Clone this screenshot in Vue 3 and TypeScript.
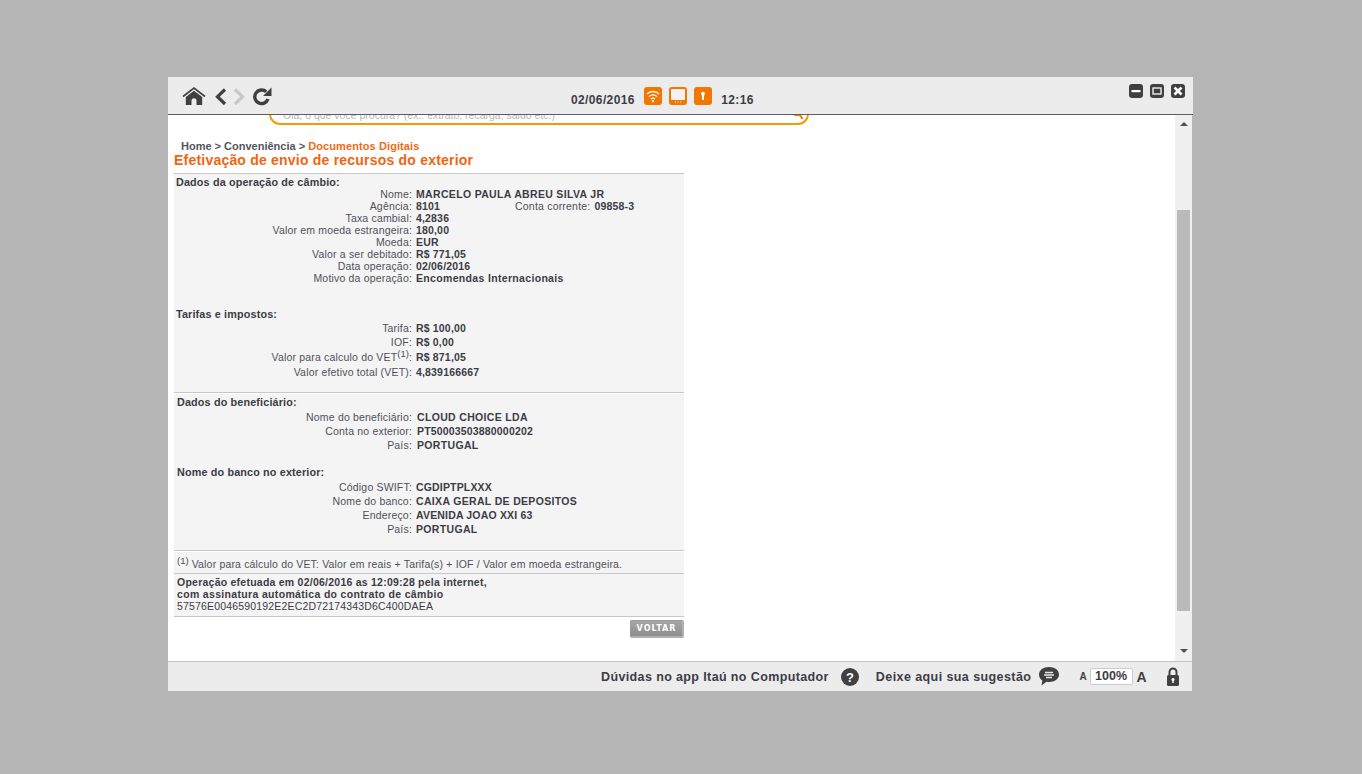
<script setup lang="ts">
interface Row { label: string; value: string; sup?: boolean; spaced?: boolean; extraLabel?: string; extraValue?: string }
const cambio: Row[] = [
  { label: 'Nome:', value: 'MARCELO PAULA ABREU SILVA JR', spaced: true },
  { label: 'Agência:', value: '8101', extraLabel: 'Conta corrente:', extraValue: '09858-3' },
  { label: 'Taxa cambial:', value: '4,2836' },
  { label: 'Valor em moeda estrangeira:', value: '180,00' },
  { label: 'Moeda:', value: 'EUR' },
  { label: 'Valor a ser debitado:', value: 'R$ 771,05' },
  { label: 'Data operação:', value: '02/06/2016' },
  { label: 'Motivo da operação:', value: 'Encomendas Internacionais', spaced: true },
]
const tarifas: Row[] = [
  { label: 'Tarifa:', value: 'R$ 100,00' },
  { label: 'IOF:', value: 'R$ 0,00' },
  { label: 'Valor para calculo do VET', value: 'R$ 871,05', sup: true },
  { label: 'Valor efetivo total (VET):', value: '4,839166667' },
]
const benef: Row[] = [
  { label: 'Nome do beneficiário:', value: 'CLOUD CHOICE LDA', spaced: true },
  { label: 'Conta no exterior:', value: 'PT50003503880000202' },
  { label: 'País:', value: 'PORTUGAL', spaced: true },
]
const banco: Row[] = [
  { label: 'Código SWIFT:', value: 'CGDIPTPLXXX' },
  { label: 'Nome do banco:', value: 'CAIXA GERAL DE DEPOSITOS', spaced: true },
  { label: 'Endereço:', value: 'AVENIDA JOAO XXI 63' },
  { label: 'País:', value: 'PORTUGAL', spaced: true },
]
</script>

<template>
  <div class="page">
    <div class="window">
      <header class="top">
        <div class="nav">
          <svg class="i-home" width="24" height="20" viewBox="0 0 24 20"><path d="M1 10.500 12 2l11 8.500" fill="none" stroke="#404040" stroke-width="1.600"/><path d="M12 4.800 3.800 11v8H9.500v-4.300a2.500 2.500 0 0 1 5 0V19h5.700v-8z" fill="#404040"/></svg>
          <svg class="i-back" width="14" height="20" viewBox="0 0 14 20"><path d="M11 3.500 3.500 10.700 11 18" fill="none" stroke="#404040" stroke-width="3.200"/></svg>
          <svg class="i-fwd" width="14" height="20" viewBox="0 0 14 20"><path d="M3 3.500l7.500 7.200L3 18" fill="none" stroke="#c8c8c8" stroke-width="3.200"/></svg>
          <svg class="i-reload" width="20" height="20" viewBox="0 0 20 20"><path d="M16 13a6.800 6.800 0 1 1-1.800-7.200" fill="none" stroke="#404040" stroke-width="3.400"/><path d="M19.500 1.500v8.500H11z" fill="#404040"/></svg>
        </div>
        <div class="status">
          <span class="date">02/06/2016</span>
          <span class="tile">
            <svg width="18" height="18" viewBox="0 0 18 18"><path d="M3 7a8.500 8.500 0 0 1 12 0M5 9.600a5.700 5.700 0 0 1 8 0M7 12a3 3 0 0 1 4 0" fill="none" stroke="#fff" stroke-width="1.300"/><circle cx="9" cy="14.200" r="1.100" fill="#fff"/></svg>
          </span>
          <span class="tile">
            <svg width="18" height="18" viewBox="0 0 18 18"><rect x="2" y="2" width="14" height="11" rx="1" fill="#f2f2f2"/><path d="M6 15h1M8.500 15h1M11 15h1" stroke="#fff" stroke-width="1"/></svg>
          </span>
          <span class="tile">
            <svg width="18" height="18" viewBox="0 0 18 18"><circle cx="9" cy="6.800" r="2" fill="#fff"/><rect x="8" y="7" width="2" height="6" fill="#fff"/></svg>
          </span>
          <span class="clock">12:16</span>
        </div>
        <div class="controls">
          <span class="ctl"><svg width="14" height="14" viewBox="0 0 14 14"><rect x="2.500" y="6" width="9" height="2.200" fill="#fff"/></svg></span>
          <span class="ctl"><svg width="14" height="14" viewBox="0 0 14 14"><rect x="3" y="4" width="8" height="6" fill="none" stroke="#eee" stroke-width="1.400"/></svg></span>
          <span class="ctl"><svg width="14" height="14" viewBox="0 0 14 14"><path d="M3.500 3.500l7 7M10.500 3.500l-7 7" stroke="#fff" stroke-width="2.600"/></svg></span>
        </div>
      </header>

      <div class="body">
        <main class="content">
          <div class="search">
            <span class="placeholder">Olá, o que você procura? (ex.: extrato, recarga, saldo etc.)</span>
            <svg width="16" height="16" viewBox="0 0 16 16"><circle cx="9" cy="5" r="5.500" fill="none" stroke="#f07c00" stroke-width="1.600"/><path d="M11.500 9.500 14.500 14" stroke="#f07c00" stroke-width="2"/></svg>
          </div>
          <div class="crumbs">Home &gt; Conveniência &gt; <span class="orange">Documentos Digitais</span></div>
          <h1 class="title">Efetivação de envio de recursos do exterior</h1>

          <section class="panel p1">
            <div class="head h1st">Dados da operação de câmbio:</div>
            <div v-for="r in cambio" :key="r.label" class="row tight">
              <span class="lab">{{ r.label }}</span>
              <span class="val" :class="{ spaced: r.spaced }">{{ r.value }}</span>
              <template v-if="r.extraLabel">
                <span class="xlab">{{ r.extraLabel }}</span>
                <span class="val">{{ r.extraValue }}</span>
              </template>
            </div>
            <div class="head h2">Tarifas e impostos:</div>
            <div v-for="r in tarifas" :key="r.label" class="row wide">
              <span class="lab">{{ r.label }}<template v-if="r.sup"><sup>(1)</sup>:</template></span>
              <span class="val">{{ r.value }}</span>
            </div>
          </section>

          <section class="panel p2">
            <div class="head hb">Dados do beneficiário:</div>
            <div v-for="r in benef" :key="r.label" class="row wide shift">
              <span class="lab">{{ r.label }}</span>
              <span class="val" :class="{ spaced: r.spaced }">{{ r.value }}</span>
            </div>
            <div class="head h3">Nome do banco no exterior:</div>
            <div v-for="r in banco" :key="r.label + r.value" class="row wide">
              <span class="lab">{{ r.label }}</span>
              <span class="val" :class="{ spaced: r.spaced }">{{ r.value }}</span>
            </div>
          </section>

          <div class="note"><sup>(1)</sup> Valor para cálculo do VET: Valor em reais + Tarifa(s) + IOF / Valor em moeda estrangeira.</div>

          <section class="panel p3">
            <strong>Operação efetuada em 02/06/2016 as 12:09:28 pela internet,</strong>
            <strong class="second">com assinatura automática do contrato de câmbio</strong>
            <span class="hash">57576E0046590192E2EC2D72174343D6C400DAEA</span>
          </section>

          <div class="actions"><button class="back" type="button">VOLTAR</button></div>
        </main>

        <aside class="scrollbar">
          <span class="arrow up"></span>
          <div class="track"><div class="thumb"></div></div>
          <span class="arrow down"></span>
        </aside>
      </div>

      <footer class="bottom">
        <span class="ftxt">Dúvidas no app Itaú no Computador</span>
        <svg class="f-q" width="18" height="18" viewBox="0 0 18 18"><circle cx="9" cy="9" r="9" fill="#404040"/><text x="9" y="13.500" text-anchor="middle" font-family="Liberation Sans, sans-serif" font-weight="700" font-size="13" fill="#fff">?</text></svg>
        <span class="ftxt f-s">Deixe aqui sua sugestão</span>
        <svg class="f-c" width="22" height="20" viewBox="0 0 22 20"><path d="M11 0c5.700 0 10 3 10 7.600s-4.300 7.400-10 7.400c-.9 0-1.700-.1-2.500-.2L3.500 18.500l.8-5C2 12 1 10 1 7.600 1 3 5.300 0 11 0z" fill="#404040"/><path d="M7 5.500h8M6 8h10M8 10.500h6" stroke="#e8e8e8" stroke-width="1.300"/></svg>
        <span class="a-small">A</span>
        <span class="zoom">100%</span>
        <span class="a-big">A</span>
        <svg class="f-l" width="14" height="20" viewBox="0 0 14 20"><path d="M3.500 9V5a3.500 3.500 0 0 1 7 0v4" fill="none" stroke="#404040" stroke-width="2"/><rect x="1" y="8" width="12" height="11" rx="1.500" fill="#404040"/><circle cx="7" cy="12.500" r="1.500" fill="#fff"/><rect x="6.300" y="12.500" width="1.400" height="3.500" fill="#fff"/></svg>
      </footer>
    </div>
  </div>
</template>

<style>
html, body { margin: 0; background: #b5b5b5; }
</style>

<style scoped>
.page {
  height: 774px;
  padding: 77px 0 0 168px;
  box-sizing: border-box;
  background: #b5b5b5;
  font-family: "Liberation Sans", Arial, sans-serif;
  overflow: hidden;
}
.window {
  width: 1025px;
  height: 614px;
  display: flex;
  flex-direction: column;
}
.top {
  height: 37px;
  flex: none;
  box-sizing: content-box;
  border-bottom: 1px solid #5c5c5c;
  background: #ececec;
  display: flex;
  position: relative;
}
.nav { display: flex; align-items: flex-start; padding: 9px 0 0 14px; }
.i-home { margin-right: 8px; }
.i-back { margin-right: 4px; }
.i-reload { margin-left: 6px; }
.status {
  position: absolute;
  left: 403px;
  top: 10px;
  display: flex;
  align-items: flex-start;
  color: #3c3c46;
  font-size: 12px;
  font-weight: 700;
  letter-spacing: .37px;
}
.date { margin-top: 6px; margin-right: 9.500px; }
.clock { margin-top: 6px; margin-left: 9px; }
.tile {
  width: 18px;
  height: 18px;
  margin-right: 7px;
  border-radius: 3px;
  background: #f07800;
  display: block;
}
.tile:nth-of-type(4) { margin-right: 0; }
.tile svg { display: block; }
.controls { position: absolute; right: 8px; top: 7px; display: flex; gap: 7px; }
.ctl { width: 14px; height: 14px; border-radius: 3px; background: #404040; display: block; }
.ctl svg { display: block; }
.body { flex: 1; min-height: 0; display: flex; background: #fff; margin-right: 1px; }
.content {
  flex: 1;
  min-width: 0;
  overflow: hidden;
  padding: 0 0 0 6px;
  color: #3c3c46;
  font-size: 11px;
  line-height: 12px;
}
.search {
  width: 540px;
  height: 24px;
  margin: -14px 0 0 95px;
  box-sizing: border-box;
  border: 2px solid #f59a00;
  border-top: 0;
  border-radius: 0 0 11px 11px;
  display: flex;
  justify-content: space-between;
  align-items: flex-end;
  padding: 0 3px 2px 12px;
}
.placeholder { color: #b8b8b8; font-size: 10.500px; line-height: 12px; }
.search svg { display: block; }
.crumbs { margin: 15px 0 0 7px; font-size: 11px; font-weight: 700; color: #55555e; line-height: 13px; }
.orange { color: #f26a10; letter-spacing: .1px; }
.title {
  margin: 0 0 5px;
  font-size: 14px;
  line-height: 15px;
  font-weight: 700;
  color: #f26510;
  letter-spacing: .21px;
}
.panel {
  width: 510px;
  background: #f4f4f4;
  border-top: 1px solid #c8c8c8;
  box-sizing: border-box;
}
.p1 { height: 219px; padding: 2px 0 0 2px; }
.p2 { height: 158px; padding: 2px 0 0 0; box-shadow: inset 0 1px 0 #fff; }
.p3 {
  height: 44px;
  padding: 2px 0 0 3px;
  border-bottom: 1px solid #c8c8c8;
  color: #3c3c46;
  font-size: 10.500px;
  line-height: 12px;
  letter-spacing: .17px;
}
.p3 strong { display: block; letter-spacing: .24px; }
.p3 .second { letter-spacing: .33px; }
.hash { display: block; line-height: 13px; }
.head {
  font-weight: 700;
  font-size: 10.800px;
  line-height: 13px;
  color: #3c3c46;
  letter-spacing: .15px;
}
.h1st { line-height: 12px; }
.p2 .head { padding-left: 3px; }
.h2 { margin-top: 23px; line-height: 14px; }
.hb { line-height: 15px; }
.h3 { margin-top: 13px; line-height: 15px; }
.row { display: flex; }
.p1 .row { margin-left: -2px; }
.tight { height: 12px; line-height: 12px; }
.wide { height: 14px; line-height: 14px; }
.p1 .wide:nth-last-child(2) { height: 15px; line-height: 16px; }
.p1 .wide:last-child { height: 15px; line-height: 16px; }
.lab { width: 238px; text-align: right; flex: none; color: #50505a; font-size: 10.500px; letter-spacing: .18px; white-space: nowrap; }
.val { margin-left: 4px; font-weight: 700; font-size: 10.500px; color: #3c3c46; letter-spacing: .17px; white-space: nowrap; }
.spaced { letter-spacing: .33px; }
.shift .val { margin-left: 5px; }
.xlab { margin-left: 75px; color: #50505a; font-size: 10.500px; letter-spacing: .2px; white-space: nowrap; }
.val + .xlab + .val { margin-left: 4px; }
sup { font-size: 9.500px; line-height: 0; vertical-align: 4px; letter-spacing: 0; }
.note {
  width: 510px;
  height: 23px;
  box-sizing: border-box;
  border-top: 1px solid #c8c8c8;
  background: #f4f4f4;
  padding: 7px 0 0 3px;
  font-size: 10.500px;
  line-height: 13px;
  color: #50505a;
  letter-spacing: .17px;
  box-shadow: inset 0 1px 0 #fff;
}
.actions { width: 510px; display: flex; justify-content: flex-end; margin-top: 3px; }
.back {
  width: 54px;
  height: 18px;
  padding: 0;
  border: 1px solid #999;
  border-bottom: 2px solid #b0b0b0;
  border-right: 2px solid #b0b0b0;
  border-radius: 2px;
  background: linear-gradient(#a8a8a8, #8c8c8c);
  color: #fff;
  font: 700 8px "DejaVu Sans", sans-serif;
  letter-spacing: 1px;
}
.scrollbar {
  width: 17px;
  flex: none;
  background: #f0f0f0;
  display: flex;
  flex-direction: column;
  align-items: center;
}
.arrow { width: 0; height: 0; border-left: 4px solid transparent; border-right: 4px solid transparent; margin: 7px 0 0; flex: none; }
.up { border-bottom: 4px solid #505050; margin-bottom: 7px; }
.down { border-top: 4px solid #505050; margin: 6px 0 8px; }
.track { flex: 1; width: 100%; padding-top: 77px; box-sizing: border-box; }
.thumb { height: 401px; background: #bababa; margin: 0 2px; }
.bottom {
  height: 29px;
  flex: none;
  border-top: 1px solid #c4c4c4;
  background: #ececec;
  display: flex;
  align-items: center;
  padding: 0 0 0 433px;
  margin-right: 1px;
  color: #3c3c46;
}
.ftxt { font-size: 12.500px; font-weight: 700; letter-spacing: .38px; white-space: nowrap; }
.f-q { margin-left: 12px; }
.f-s { margin-left: 17px; letter-spacing: .42px; }
.f-c { margin-left: 7px; }
.a-small { margin-left: 19px; font-size: 10px; font-weight: 700; color: #404040; }
.zoom {
  width: 41px;
  height: 15px;
  margin-left: 3px;
  background: #fff;
  border: 1px solid #ccc;
  border-radius: 2px;
  font-size: 12.500px;
  font-weight: 700;
  line-height: 15px;
  text-align: center;
}
.a-big { margin-left: 4px; font-size: 14px; font-weight: 700; color: #404040; }
.f-l { margin-left: 19px; }
</style>
